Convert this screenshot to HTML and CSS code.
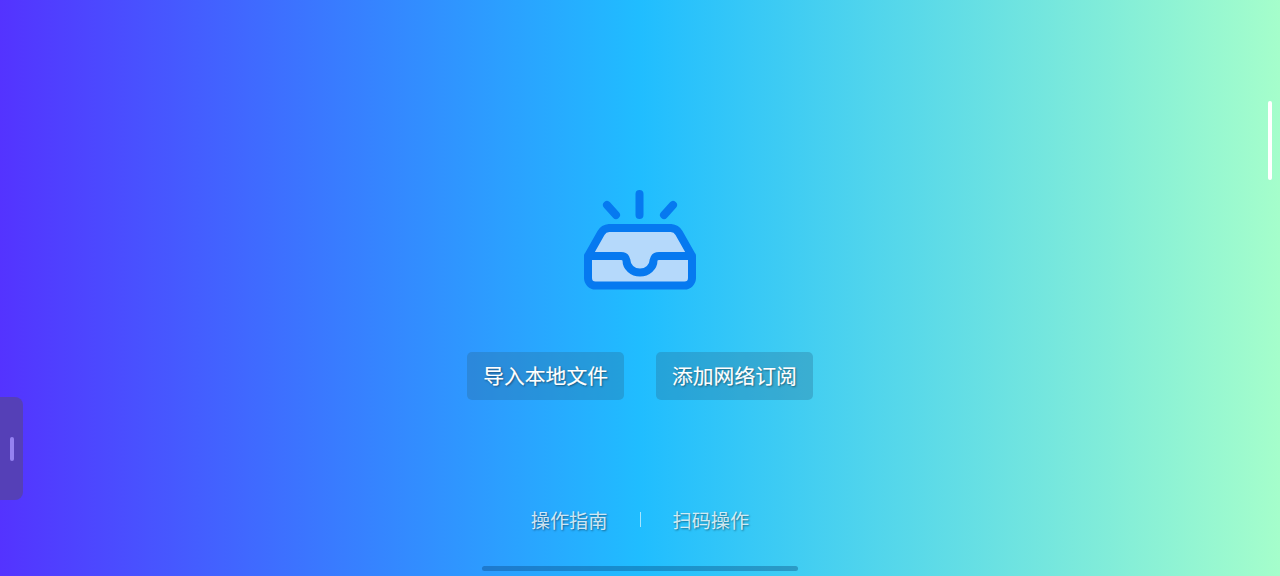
FILE: index.html
```html
<!DOCTYPE html>
<html lang="zh-CN">
<head>
<meta charset="utf-8">
<title>导入</title>
<link rel="stylesheet" href="styles.css">
</head>
<body>
<main class="stage">
  <svg class="inbox" viewBox="0 0 112 100" width="112" height="100" aria-hidden="true">
    <path class="inbox-fill" d="M19 38H93L108 66V96H4V66Z"/>
    <path class="inbox-line" d="M55.500 4V25M23 15L32 25M89 15L80 25"/>
    <path class="inbox-line" d="M4 66V88A7.500 7.500 0 0 0 11.500 95.500H100.500A7.500 7.500 0 0 0 108 88V66L95 43A10 10 0 0 0 87 38H25A10 10 0 0 0 17 43L4 66H37C41 66 42 68 42.500 70.500A13.500 12 0 0 0 69.500 70.500C70 68 71 66 75 66H108"/>
  </svg>
  <div class="actions">
    <button class="action" type="button">导入本地文件</button>
    <button class="action" type="button">添加网络订阅</button>
  </div>
  <nav class="links">
    <a class="link">操作指南</a>
    <span class="divider"></span>
    <a class="link">扫码操作</a>
  </nav>
</main>
<div class="side-handle"><span class="side-grip"></span></div>
<div class="scroll-thumb"></div>
<div class="home-bar"></div>
</body>
</html>
```
FILE: styles.css
```css
html, body {
  margin: 0;
  height: 100%;
  overflow: hidden;
}

body {
  position: relative;
  background: linear-gradient(to right, #5433ff, #20bdff, #a5fecb);
  font-family: "Noto Sans CJK SC", "Noto Sans", sans-serif;
}

.stage {
  display: flex;
  flex-direction: column;
  align-items: center;
  padding-top: 190px;
}

.inbox {
  display: block;
}

.inbox-fill {
  fill: #b5d9fb;
}

.inbox-line {
  fill: none;
  stroke: #0679f0;
  stroke-width: 8;
  stroke-linecap: round;
  stroke-linejoin: round;
}

.actions {
  display: flex;
  gap: 32px;
  margin-top: 62px;
}

.action {
  height: 48px;
  padding: 0 16px 2px;
  border: 0;
  border-radius: 5px;
  background: rgba(40, 100, 135, 0.3);
  color: #fff;
  font: 400 20.8px/46px "Noto Sans CJK SC", "Noto Sans", sans-serif;
  -webkit-text-stroke: 0.15px #fff;
  text-shadow: 1px 1px 2px rgba(0, 0, 0, 0.45);
}

.links {
  display: flex;
  align-items: center;
  gap: 32px;
  margin-top: 104px;
  height: 32px;
}

.link {
  color: rgba(255, 255, 255, 0.8);
  font-size: 19.2px;
  line-height: 32px;
  text-shadow: 1px 1px 2px rgba(0, 0, 0, 0.45);
}

.divider {
  width: 1px;
  height: 15px;
  margin-top: -2px;
  background: rgba(255, 255, 255, 0.6);
}

.side-handle {
  position: absolute;
  left: -8px;
  top: 397px;
  display: flex;
  align-items: center;
  justify-content: flex-end;
  box-sizing: border-box;
  width: 31px;
  height: 103px;
  padding-right: 9px;
  border-radius: 8px;
  background: rgba(85, 65, 175, 0.9);
}

.side-grip {
  width: 4px;
  height: 24px;
  border-radius: 2px;
  background: rgba(165, 145, 255, 0.8);
}

.scroll-thumb {
  position: absolute;
  left: 1268px;
  top: 101px;
  width: 4px;
  height: 79px;
  border-radius: 2px;
  background: #fff;
}

.home-bar {
  position: absolute;
  left: 482px;
  top: 566px;
  width: 316px;
  height: 5px;
  border-radius: 3px;
  background: rgba(0, 51, 102, 0.32);
}
```
